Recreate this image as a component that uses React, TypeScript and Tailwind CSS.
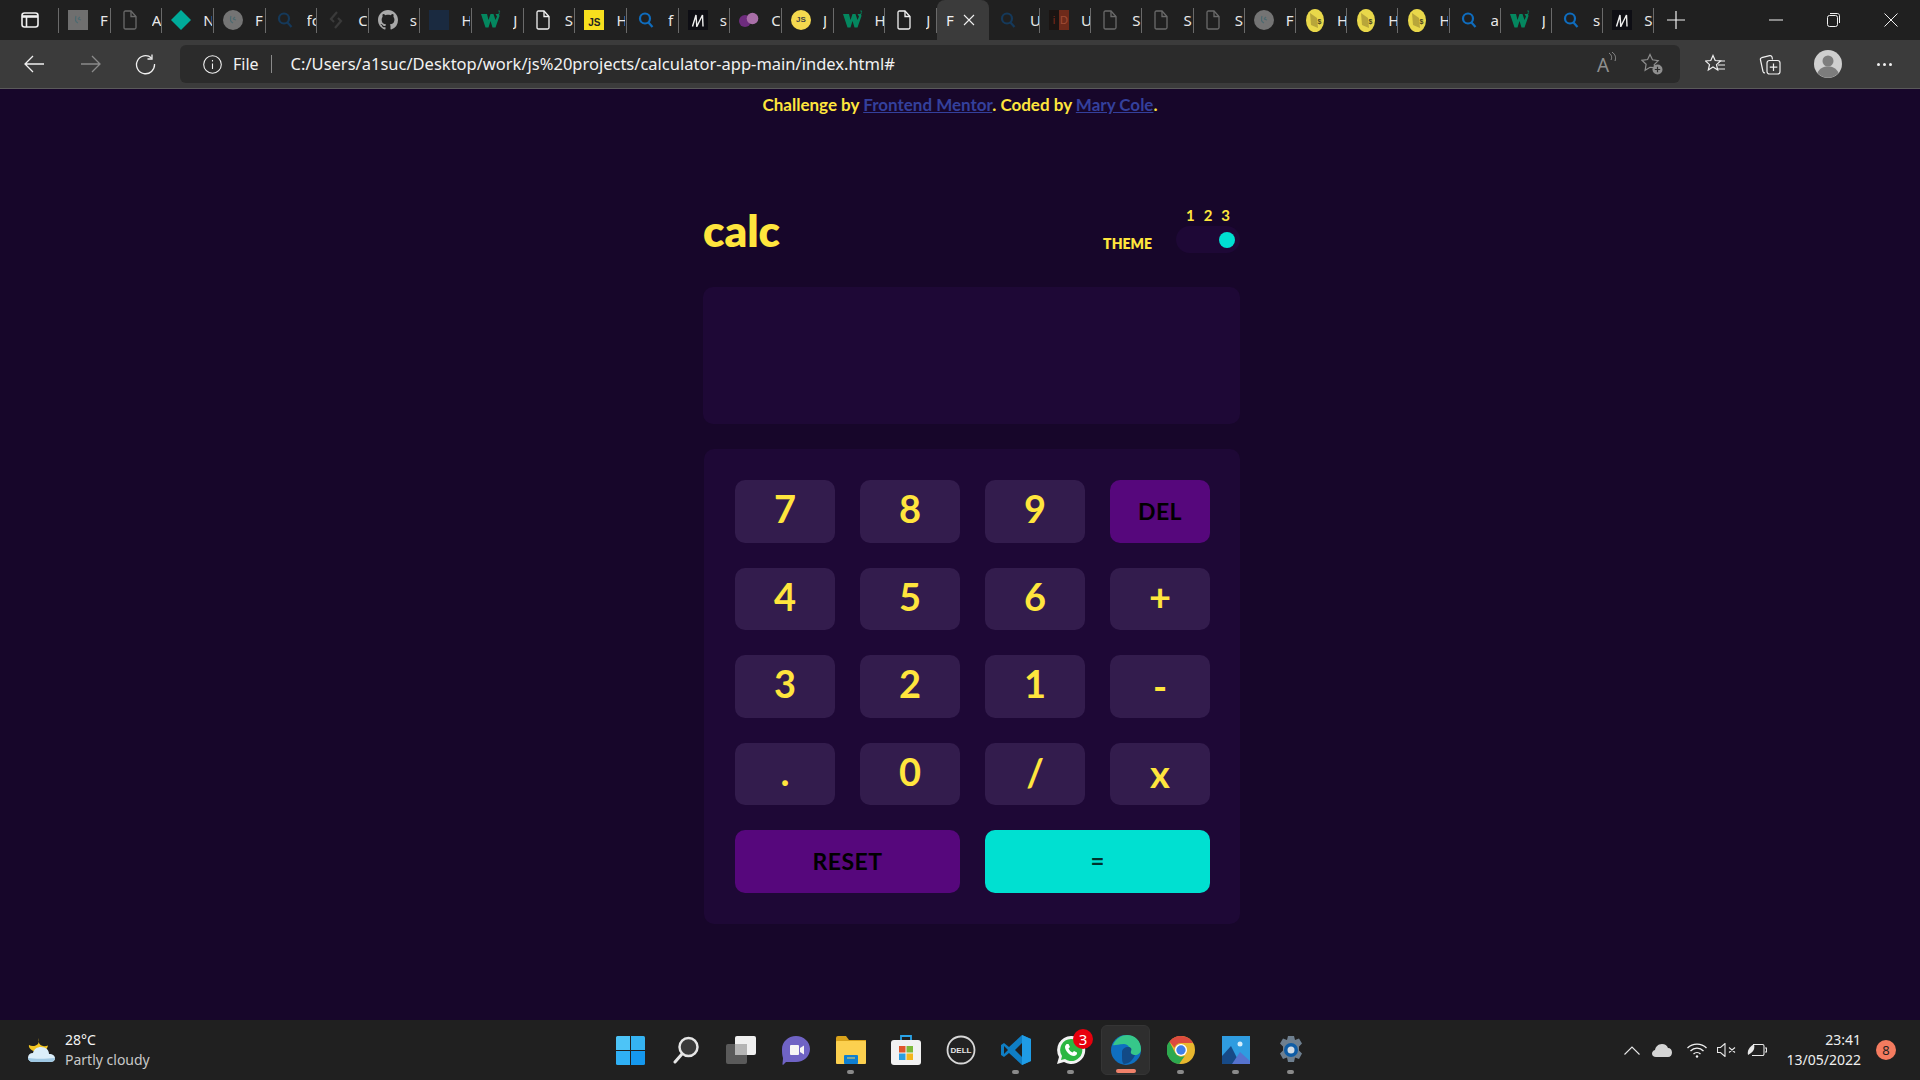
import React from "react";

type FavKind =
  | "grayBox" | "docDim" | "diamond" | "grayCircle" | "searchDim" | "chevrons" | "github" | "navy"
  | "w3" | "doc" | "jsBox" | "search" | "mdn" | "purple" | "jsCircle" | "idev" | "coin";

function Favicon({ kind }: { kind: FavKind }) {
  switch (kind) {
    case "grayBox":
      return (
        <svg width="20" height="20" viewBox="0 0 20 20">
          <rect width="20" height="20" fill="#6f6f6f" />
          <path d="M8 6c-1 3-.5 6 2 7M10 9l2-2M10 9l3 1" stroke="#4d6a70" strokeWidth="1.2" fill="none" />
        </svg>
      );
    case "grayCircle":
      return (
        <svg width="20" height="20" viewBox="0 0 20 20">
          <circle cx="10" cy="10" r="10" fill="#747474" />
          <path d="M8 6c-1 3-.5 6 2 7M10 9l2-2M10 9l3 1" stroke="#4d6a70" strokeWidth="1.2" fill="none" />
        </svg>
      );
    case "docDim":
    case "doc": {
      const c = kind === "doc" ? "#f2f2f2" : "#6a6a6a";
      return (
        <svg width="20" height="20" viewBox="0 0 20 20" fill="none" stroke={c} strokeWidth="1.3">
          <path d="M4 2.5c0-1 .5-1.5 1.5-1.5H11l5 5.5v11c0 1-.5 1.5-1.5 1.5h-9c-1 0-1.5-.5-1.5-1.5z" />
          <path d="M11 1v5.5h5" />
        </svg>
      );
    }
    case "diamond":
      return (
        <svg width="20" height="20" viewBox="0 0 20 20">
          <path d="M10 0l10 10-10 10L0 10z" fill="#00ab9a" />
        </svg>
      );
    case "search":
    case "searchDim": {
      const c = kind === "search" ? "#0f6cbd" : "#15395a";
      return (
        <svg width="20" height="20" viewBox="0 0 20 20" fill="none" stroke={c} strokeWidth="2.2">
          <circle cx="9" cy="8.5" r="5" />
          <path d="M12.5 12.5l4 4.5" />
        </svg>
      );
    }
    case "chevrons":
      return (
        <svg width="20" height="20" viewBox="0 0 20 20" fill="none" stroke="#3a3a3a" strokeWidth="2.2">
          <path d="M11 2L5 9l3 3M9 18l6-7-3-3" />
        </svg>
      );
    case "github":
      return (
        <svg width="20" height="20" viewBox="0 0 16 16" fill="#a8a8a8">
          <path d="M8 0C3.58 0 0 3.58 0 8c0 3.54 2.29 6.53 5.47 7.59.4.07.55-.17.55-.38 0-.19-.01-.82-.01-1.49-2.01.37-2.53-.49-2.69-.94-.09-.23-.48-.94-.82-1.13-.28-.15-.68-.52-.01-.53.63-.01 1.08.58 1.23.82.72 1.21 1.87.87 2.33.66.07-.52.28-.87.51-1.07-1.78-.2-3.64-.89-3.64-3.95 0-.87.31-1.59.82-2.15-.08-.2-.36-1.02.08-2.12 0 0 .67-.21 2.2.82.64-.18 1.32-.27 2-.27s1.36.09 2 .27c1.53-1.04 2.2-.82 2.2-.82.44 1.1.16 1.92.08 2.12.51.56.82 1.27.82 2.15 0 3.07-1.87 3.75-3.65 3.95.29.25.54.73.54 1.48 0 1.07-.01 1.93-.01 2.2 0 .21.15.46.55.38A8.01 8.01 0 0016 8c0-4.42-3.58-8-8-8z" />
        </svg>
      );
    case "navy":
      return <div className="w-5 h-5 bg-[#1a2a40]" />;
    case "w3":
      return (
        <svg width="20" height="20" viewBox="0 0 20 20">
          <path d="M0 4h6l1.500 6L9.500 4h3l2 6L16 6.500 14.500 4H18l.5 2-4 11.500h-3L9.500 11l-2 6.500h-3z" fill="#04875f" />
          <path d="M17 1h2l-1 1.200c1 .2 1 1.800-1 1.800" stroke="#04875f" strokeWidth=".7" fill="none" />
        </svg>
      );
    case "jsBox":
      return (
        <div className="w-5 h-5 bg-[#f7df1e] flex items-end justify-center text-[10px] leading-[15px] font-bold text-[#222] font-['Liberation_Sans',sans-serif]">
          JS
        </div>
      );
    case "jsCircle":
      return (
        <div className="w-5 h-5 rounded-full bg-[#f5d94e] flex items-center justify-center text-[8px] font-bold text-[#444] font-['Liberation_Sans',sans-serif]">
          JS
        </div>
      );
    case "mdn":
      return (
        <div className="w-5 h-5 bg-[#0e0e14] flex items-center justify-center">
          <svg width="14" height="13" viewBox="0 0 14 13" fill="none" stroke="#efefef" strokeWidth="1.4">
            <path d="M1.500 12.500L5 1l.8 11.500L11.500 1l.5 11.500" />
          </svg>
        </div>
      );
    case "purple":
      return (
        <svg width="20" height="20" viewBox="0 0 20 20">
          <circle cx="6" cy="11" r="6" fill="#6e2c7e" />
          <circle cx="13.5" cy="8.5" r="5.8" fill="#a96fa8" />
        </svg>
      );
    case "idev":
      return (
        <div className="w-5 h-5 flex text-[11px] leading-5 font-['Liberation_Sans',sans-serif]">
          <span className="w-2.5 h-5 bg-[#1a1412] text-[#7a2a1c] text-center">i</span>
          <span className="w-2.5 h-5 bg-[#6e2a1a] text-[#a04a34] text-center">D</span>
        </div>
      );
    case "coin":
      return (
        <svg width="18" height="23" viewBox="0 0 18 23">
          <ellipse cx="9" cy="11.5" rx="9" ry="11.5" fill="#e9d84a" />
          <path d="M4 4l7 5 1 10-7-3z" fill="#b8a63a" />
          <text x="11.5" y="15" fontSize="7" fontWeight="700" fill="#4a4420" fontFamily="Liberation Sans">$</text>
        </svg>
      );
  }
}

const tabs: { kind: FavKind; t: string }[] = [
  { kind: "grayBox", t: "F" },
  { kind: "docDim", t: "A" },
  { kind: "diamond", t: "N" },
  { kind: "grayCircle", t: "F" },
  { kind: "searchDim", t: "fc" },
  { kind: "chevrons", t: "C" },
  { kind: "github", t: "s" },
  { kind: "navy", t: "H" },
  { kind: "w3", t: "J" },
  { kind: "doc", t: "S" },
  { kind: "jsBox", t: "H" },
  { kind: "search", t: "f" },
  { kind: "mdn", t: "s" },
  { kind: "purple", t: "C" },
  { kind: "jsCircle", t: "J" },
  { kind: "w3", t: "H" },
  { kind: "doc", t: "J" },
];

const tabsAfter: { kind: FavKind; t: string }[] = [
  { kind: "searchDim", t: "U" },
  { kind: "idev", t: "U" },
  { kind: "docDim", t: "S" },
  { kind: "docDim", t: "S" },
  { kind: "docDim", t: "S" },
  { kind: "grayCircle", t: "F" },
  { kind: "coin", t: "H" },
  { kind: "coin", t: "H" },
  { kind: "coin", t: "H" },
  { kind: "search", t: "a" },
  { kind: "w3", t: "J" },
  { kind: "search", t: "s" },
  { kind: "mdn", t: "S" },
];

function Tab({ kind, t, wide }: { kind: FavKind; t: string; wide?: boolean }) {
  return (
    <div className={`${wide ? "w-[51.65px]" : "w-[51.2px]"} h-[25px] shrink-0 flex items-center border-r border-[#6a6a6a] pl-[9px]`}>
      <div className="w-5 flex justify-center shrink-0">
        <Favicon kind={kind} />
      </div>
      <div className="ml-3 w-[9px] overflow-hidden text-[15px] leading-5 text-[#e8e8e8] whitespace-nowrap">{t}</div>
    </div>
  );
}

function TabBar() {
  return (
    <div className="h-10 bg-[#202020] flex items-center shrink-0 relative">
      <div className="w-[59px] h-[25px] shrink-0 border-r border-[#6a6a6a] flex items-center pl-[21px]">
        <svg width="18" height="18" viewBox="0 0 18 18" fill="none" stroke="#f0f0f0" strokeWidth="1.6">
          <rect x="1" y="2" width="16" height="14" rx="2.5" />
          <path d="M1 5.5h16" strokeWidth="2.6" />
          <path d="M5.5 5.5V16" />
        </svg>
      </div>
      {tabs.map((tab, i) => (
        <Tab key={i} kind={tab.kind} t={tab.t} wide />
      ))}
      <div className="w-[52px] h-10 bg-[#3b3b3b] rounded-t-lg shrink-0 flex items-center pl-[9px]">
        <span className="text-[15px] text-[#f0f0f0] w-[9px] overflow-hidden">F</span>
        <svg className="ml-[8px]" width="12" height="12" viewBox="0 0 12 12" stroke="#f0f0f0" strokeWidth="1.1">
          <path d="M1 1l10 10M11 1L1 11" />
        </svg>
      </div>
      {tabsAfter.map((tab, i) => (
        <Tab key={i} kind={tab.kind} t={tab.t} />
      ))}
      <svg className="ml-[13px]" width="18" height="18" viewBox="0 0 18 18" stroke="#f0f0f0" strokeWidth="1.2">
        <path d="M9 0v18M0 9h18" />
      </svg>
      <div className="ml-auto flex items-center pr-[22px] gap-[44px]">
        <svg width="14" height="2" viewBox="0 0 14 2" stroke="#f0f0f0"><path d="M0 1h14" /></svg>
        <svg width="13" height="14" viewBox="0 0 13 14" fill="none" stroke="#f0f0f0">
          <rect x=".5" y="2.5" width="10" height="11" rx="2" />
          <path d="M3 .5h7.5c1 0 2 1 2 2V10" />
        </svg>
        <svg width="14" height="14" viewBox="0 0 14 14" stroke="#f0f0f0"><path d="M.5.5l13 13M13.5.5l-13 13" /></svg>
      </div>
    </div>
  );
}

function NavBar() {
  return (
    <div className="h-[49px] bg-[#3b3b3b] border-b border-[#5a5a5a] flex items-center shrink-0">
      <div className="w-[180px] flex items-center pl-6 gap-[35px] shrink-0">
        <svg width="21" height="18" viewBox="0 0 21 18" fill="none" stroke="#f0f0f0" strokeWidth="1.3"><path d="M20 9H1M9 1L1 9l8 8" /></svg>
        <svg width="21" height="18" viewBox="0 0 21 18" fill="none" stroke="#8a8a8a" strokeWidth="1.3"><path d="M1 9h19M12 1l8 8-8 8" /></svg>
        <svg className="-ml-[1px]" width="21" height="21" viewBox="0 0 21 21" fill="none" stroke="#f0f0f0" strokeWidth="1.3">
          <path d="M16.5 4a9 9 0 1 0 3 6" />
          <path d="M17 .5V5h-4.5" />
        </svg>
      </div>
      <div className="w-[1500px] h-[38px] bg-[#2b2b2b] rounded-md flex items-center pl-[23px] shrink-0">
        <svg width="19" height="19" viewBox="0 0 19 19" fill="none" stroke="#f0f0f0" strokeWidth="1.1">
          <circle cx="9.5" cy="9.5" r="8.8" />
          <path d="M9.5 8.5v5.5M9.5 5v1.5" />
        </svg>
        <span className="ml-[11px] text-[16px] text-[#f2f2f2]">File</span>
        <span className="ml-[12px] w-[1px] h-[18px] bg-[#8a8a8a]" />
        <span className="ml-[19px] text-[16.5px] text-[#f2f2f2]">
          C:/Users/a1suc/Desktop/work/js%20projects/calculator-app-main/index.html#
        </span>
        <div className="ml-auto flex items-center gap-[24px] pr-[17px]">
          <div className="relative w-5 h-5">
            <span className="text-[19px] leading-5 text-[#8f8f8f]">A</span>
            <svg className="absolute -top-[2px] left-[11px]" width="9" height="11" viewBox="0 0 9 11" fill="none" stroke="#8f8f8f">
              <path d="M1 1c3 2 3 5 2 7M4 0c4 3 4 6 3 9" />
            </svg>
          </div>
          <svg width="22" height="22" viewBox="0 0 22 22" fill="none" stroke="#8f8f8f" strokeWidth="1.2">
            <path d="M9 1.5l2.5 5.3 5.7.8-4 4 .6 3-4.8-.3-4.9 3 1-6-4.2-4 5.7-.8z" />
            <circle cx="16.5" cy="16.5" r="5" fill="#8f8f8f" stroke="none" />
            <path d="M16.5 13.8v5.4M13.8 16.5h5.4" stroke="#2b2b2b" />
          </svg>
        </div>
      </div>
      <div className="flex items-center ml-[25px] gap-[35px]">
        <svg width="20" height="20" viewBox="0 0 20 20" fill="none" stroke="#f0f0f0" strokeWidth="1.2">
          <path d="M8 1.5l2.2 5 5.3.5-4 3.6 1.2 5.3L8 13l-4.7 3 1.2-5.4L.5 7l5.3-.5z" />
          <path d="M14 7h6M13 11h7M12 15h8" />
        </svg>
        <svg className="-ml-[1px]" width="22" height="22" viewBox="0 0 22 22" fill="none" stroke="#f0f0f0" strokeWidth="1.2">
          <path d="M6 20c-1 0-1.600-.5-2-1.500L1.500 7c-.3-1 .2-2 1.200-2.300l8-2c1-.2 2 .4 2.300 1.300l.5 2.500" />
          <rect x="8" y="7.500" width="13" height="13.500" rx="2.500" />
          <path d="M14.500 10.500v7.500M10.800 14.200h7.500" />
        </svg>
        <svg className="-ml-[2px]" width="28" height="28" viewBox="0 0 28 28">
          <circle cx="14" cy="14" r="14" fill="#cfcfcf" />
          <circle cx="14" cy="11" r="5.500" fill="#7d7d7d" />
          <path d="M3.500 23c2-5 6-6.500 10.500-6.500S22.500 18 24.500 23A14 14 0 0 1 3.500 23z" fill="#7d7d7d" />
        </svg>
        <div className="flex gap-[3px]">
          <span className="w-[3px] h-[3px] rounded-full bg-[#f0f0f0]" />
          <span className="w-[3px] h-[3px] rounded-full bg-[#f0f0f0]" />
          <span className="w-[3px] h-[3px] rounded-full bg-[#f0f0f0]" />
        </div>
      </div>
    </div>
  );
}

const keys = ["7", "8", "9", "DEL", "4", "5", "6", "+", "3", "2", "1", "-", ".", "0", "/", "x"];

function Key({ label }: { label: string }) {
  if (label === "DEL") {
    return (
      <button className="h-[62.5px] rounded-[10px] bg-[#56077c] text-black text-[23px] font-bold tracking-[0.5px]">
        {label}
      </button>
    );
  }
  // x and - already sit on the middle, the digits ride a bit high
  const shift = label === "x" || label === "-" ? "" : "pb-[6px]";
  return (
    <button className={`h-[62.5px] rounded-[10px] bg-[#331c4d] text-[#ffe53d] text-[38px] font-bold ${shift}`}>
      {label}
    </button>
  );
}

function Calculator() {
  return (
    <div className="flex-1 bg-[#17062a] min-h-0 font-['Lato',sans-serif]">
      <p className="text-center text-[17px] leading-[20px] pt-[6px] font-bold text-[#ffe53d]">
        Challenge by <a href="#" className="text-[#34409c] underline">Frontend Mentor</a>. Coded by{" "}
        <a href="#" className="text-[#34409c] underline">Mary Cole</a>.
      </p>
      <div className="ml-[703px] w-[537px] mt-[88px]">
        <div className="flex items-end h-[65px]">
          <h1 className="text-[44px] leading-[44px] font-extrabold text-[#ffe53d] mb-[16px]">calc</h1>
          <div className="ml-auto flex items-end">
            <span className="text-[14px] leading-5 font-extrabold text-[#ffe53d] mb-[14px]">THEME</span>
            <div className="ml-[24px] w-[64px] mb-[15px]">
              <div className="flex justify-between px-[10px] text-[15px] leading-[20px] font-bold text-[#ffe53d]">
                <span>1</span>
                <span>2</span>
                <span>3</span>
              </div>
              <div className="h-[27px] mt-[1px] rounded-[14px] bg-[#1e0836] flex items-center justify-end pr-[5px]">
                <span className="w-4 h-4 rounded-full bg-[#00e0d1]" />
              </div>
            </div>
          </div>
        </div>
        <div className="h-[137px] mt-[19px] rounded-[10px] bg-[#1e0836]" />
        <div className="mt-[25px] ml-[1px] rounded-[10px] bg-[#1e0836] pt-[31px] pl-[31px] pr-[30px] pb-[31px] grid grid-cols-4 gap-[25px]">
          {keys.map((k) => (
            <Key key={k} label={k} />
          ))}
          <button className="col-span-2 h-[62.5px] rounded-[10px] bg-[#56077c] text-black text-[23px] font-bold tracking-[0.5px]">
            RESET
          </button>
          <button className="col-span-2 h-[62.5px] rounded-[10px] bg-[#00e0d1] text-black/80 text-[24px] font-bold">
            =
          </button>
        </div>
      </div>
    </div>
  );
}

function TaskIcon({ children, dot, active }: { children: React.ReactNode; dot?: boolean; active?: boolean }) {
  return (
    <div className={`relative w-[49px] h-[50px] rounded-md flex items-center justify-center ${active ? "bg-[#2e2e2e] border border-[#353535]" : ""}`}>
      {children}
      {dot && <span className="absolute bottom-[1px] left-[21px] w-[7px] h-1 rounded-sm bg-[#8a8a8a]" />}
      {active && <span className="absolute bottom-[1px] left-[14px] w-[20px] h-1 rounded-sm bg-[#f0816a]" />}
    </div>
  );
}

function TaskBar() {
  return (
    <div className="h-[60px] bg-[#202020] shrink-0 flex items-center relative text-white font-['Noto_Sans',sans-serif]">
      <div className="flex items-center pl-[27px] w-[604px] shrink-0">
        <svg width="29" height="26" viewBox="0 0 29 26">
          <path d="M12 1c-1 4 0 7 4 8 2 .5 3 .3 5-.5-1 5-6 8-11 7C5 14 1 11 2 8c3 2 7 1 9-1 1-2 1-4 1-6z" fill="#f3c623" />
          <path d="M6 25c-3 0-5-2-5-4.500S3 16 6 16c1-4 4-6 8-6 5 0 8 3 8 7 4 0 6 2 6 4.500S26 25 23 25z" fill="#dbeefa" />
          <path d="M6 25c-3 0-5-2-5-4 6 1 18 1 27 0 0 2-2 4-5 4z" fill="#9fc8e3" />
        </svg>
        <div className="ml-[9px] text-[14px] leading-[20px] -mt-[1px]">
          <div className="text-[#f5f5f5]">28°C</div>
          <div className="text-[#c8c8c8]">Partly cloudy</div>
        </div>
      </div>
      <div className="flex items-center gap-[6px] ml-[2px]">
        <TaskIcon>
          <svg width="29" height="29" viewBox="0 0 29 29">
            <path d="M0 1.500A1.500 1.500 0 0 1 1.500 0H14v14H0z" fill="#4dc4f7" />
            <path d="M15 0h12.500A1.500 1.500 0 0 1 29 1.500V14H15z" fill="#35b3f2" />
            <path d="M0 15h14v14H1.500A1.500 1.500 0 0 1 0 27.500z" fill="#2fb0f5" />
            <path d="M15 15h14v12.500a1.500 1.500 0 0 1-1.500 1.500H15z" fill="#1598ee" />
          </svg>
        </TaskIcon>
        <TaskIcon>
          <svg width="28" height="28" viewBox="0 0 28 28" fill="none">
            <circle cx="16.500" cy="11" r="9" stroke="#e6e6e6" strokeWidth="2.500" fill="#3a3a3a" />
            <path d="M10 18l-7 8" stroke="#e6e6e6" strokeWidth="3" strokeLinecap="round" />
          </svg>
        </TaskIcon>
        <TaskIcon>
          <svg width="30" height="28" viewBox="0 0 30 28">
            <rect x="0" y="8" width="21" height="20" rx="2" fill="#5a5a5a" />
            <rect x="9" y="0" width="21" height="19" rx="2" fill="#f0f0f0" />
            <rect x="9" y="8" width="12" height="11" fill="#b5b5b5" />
          </svg>
        </TaskIcon>
        <TaskIcon>
          <svg width="28" height="29" viewBox="0 0 28 29">
            <path d="M14 0c8 0 14 6 14 13s-6 13-14 13H4l-3 3c-1 0 0-4 0-7-1-3-1-6-1-9C0 6 6 0 14 0z" fill="#6f63c4" />
            <rect x="8" y="9" width="9" height="10" rx="1" fill="#f5f5f5" />
            <path d="M18 12l4-2.500v9L18 16z" fill="#f5f5f5" />
          </svg>
        </TaskIcon>
        <TaskIcon dot>
          <svg width="30" height="28" viewBox="0 0 30 28">
            <path d="M0 2a2 2 0 0 1 2-2h8l3 4h17v4H0z" fill="#d9a21b" />
            <rect y="5" width="30" height="23" rx="1" fill="#fcd04f" />
            <rect x="8" y="19" width="14" height="9" rx="1" fill="#0f7fd1" />
            <path d="M11 22h8" stroke="#f6d25f" />
          </svg>
        </TaskIcon>
        <TaskIcon>
          <svg width="30" height="30" viewBox="0 0 30 30">
            <path d="M10 6V1h10v5" fill="none" stroke="#2aa4e8" strokeWidth="1.800" />
            <rect y="5" width="30" height="25" rx="3" fill="#f2f2f2" />
            <rect x="8" y="11" width="6.500" height="6.500" fill="#e0562b" />
            <rect x="15.500" y="11" width="6.500" height="6.500" fill="#7cb93a" />
            <rect x="8" y="18.500" width="6.500" height="6.500" fill="#2a9ee0" />
            <rect x="15.500" y="18.500" width="6.500" height="6.500" fill="#f3b61c" />
          </svg>
        </TaskIcon>
        <TaskIcon>
          <svg width="30" height="30" viewBox="0 0 30 30">
            <circle cx="15" cy="15" r="13.500" fill="#222" stroke="#d8d8d8" strokeWidth="1.800" />
            <text x="15" y="18" textAnchor="middle" fontSize="8" fontWeight="700" fill="#e6e6e6" fontFamily="Liberation Sans">DELL</text>
          </svg>
        </TaskIcon>
        <TaskIcon dot>
          <svg width="30" height="30" viewBox="0 0 30 30">
            <path d="M21 0l9 4v22l-9 4L8 18l-5 4-3-2v-10l3-2 5 4z" fill="#0f7ec4" />
            <path d="M21 0l9 4v22l-9 4z" fill="#1f9ce6" />
            <path d="M21 8l-7 7 7 7z" fill="#202020" />
            <path d="M3 11l4 4-4 4z" fill="#202020" />
          </svg>
        </TaskIcon>
        <TaskIcon dot>
          <svg width="30" height="30" viewBox="0 0 30 30">
            <path d="M15 1a14 14 0 0 0-12 21L1 29l7-2A14 14 0 1 0 15 1z" fill="#f3f3f3" />
            <path d="M15 4a11 11 0 0 0-9 17l-1 4 4-1A11 11 0 1 0 15 4z" fill="#2bb741" />
            <path d="M11 9c-1 0-2 2-2 3 0 4 5 9 9 9 1 0 3-1 3-2.500v-1l-3-1.500-1.500 1.500c-2-1-3-2-4-4L14 12l-1.500-3z" fill="#fff" />
          </svg>
          <span className="absolute top-[4px] left-[27px] w-[20px] h-[20px] rounded-full bg-[#e8000d] text-[15px] leading-[20px] text-center text-white">3</span>
        </TaskIcon>
        <TaskIcon active>
          <svg width="30" height="30" viewBox="0 0 30 30">
            <circle cx="15" cy="15" r="15" fill="#0f6fc0" />
            <path d="M2 10C5 3 11 0 16 0c8 0 14 6 14 14 0 4-3 6-6 6-4 0-6-2-6-4 2-3-1-7-5-7-6 0-10 2-11 1z" fill="#36c78a" />
            <path d="M11 17c0-3 3-5 6-5s4 2 3 4c-1 3 2 4 4 4-2 5-6 9-11 9-2-1-2-4-2-12z" fill="#124a86" />
          </svg>
        </TaskIcon>
        <TaskIcon dot>
          <svg width="28" height="30" viewBox="0 0 30 30">
            <circle cx="15" cy="15" r="15" fill="#e8b72e" />
            <path d="M15 0a15 15 0 0 1 13 7.500H15a7.500 7.500 0 0 0-7 5L2.500 6A15 15 0 0 1 15 0z" fill="#dd4b3e" />
            <path d="M2.500 6l6.500 12.500A7.500 7.500 0 0 0 19 21.500L13 30A15 15 0 0 1 2.500 6z" fill="#2da94f" />
            <circle cx="15" cy="15" r="6.500" fill="#fff" />
            <circle cx="15" cy="15" r="5" fill="#3f7fe8" />
          </svg>
        </TaskIcon>
        <TaskIcon dot>
          <svg width="28" height="28" viewBox="0 0 28 28">
            <rect width="28" height="28" fill="#2f9ce0" />
            <circle cx="18" cy="8" r="2.500" fill="#d6eefa" />
            <path d="M0 28V20l9-10 9 18z" fill="#174a87" />
            <path d="M10 28l8-12 10 9v3z" fill="#5673cf" />
          </svg>
        </TaskIcon>
        <TaskIcon dot>
          <svg width="28" height="29" viewBox="0 0 28 29">
            <path d="M11 0h6l1 4 4-1.500 3 5-3 3v4l3 3-3 5.500-4-1.500-1 4.500h-6l-1-4.500-4 1.500-3-5.500 3-3v-4l-3-3 3-5 4 1.500z" fill="#6e7f8f" />
            <circle cx="14" cy="14" r="7" fill="#0e5ca5" />
            <circle cx="14" cy="14" r="3.500" fill="#d4dde6" />
          </svg>
        </TaskIcon>
      </div>
      <div className="ml-auto flex items-center pr-[24px]">
        <svg width="16" height="9" viewBox="0 0 16 9" fill="none" stroke="#e8e8e8" strokeWidth="1.100"><path d="M.5 8.500L8 1l7.500 7.500" /></svg>
        <svg className="ml-[12px]" width="20" height="13" viewBox="0 0 20 13"><path d="M4 13c-2.500 0-4-1.500-4-3.500C0 8 1 6.500 3 6c.5-3 3-6 7-6 3 0 5 1.500 6 4 2.500 0 4 2 4 4.500S18.500 13 16 13z" fill="#d4d4d4" /></svg>
        <svg className="ml-[15px]" width="20" height="15" viewBox="0 0 20 15" fill="none" stroke="#f0f0f0" strokeWidth="1.300">
          <path d="M.5 5a13.500 13.500 0 0 1 19 0M3.500 8a9 9 0 0 1 13 0M6.500 11a5 5 0 0 1 7 0" />
          <circle cx="10" cy="13.500" r="1.200" fill="#f0f0f0" stroke="none" />
        </svg>
        <svg className="ml-[10px]" width="19" height="14" viewBox="0 0 19 14" fill="none" stroke="#e8e8e8" strokeWidth="1.100">
          <path d="M.5 4.500h3L8 .5v13l-4.500-4h-3zM12 4.500l6 5M18 4.500l-6 5" />
        </svg>
        <svg className="ml-[11px]" width="20" height="14" viewBox="0 0 20 14" fill="none" stroke="#e8e8e8" strokeWidth="1.100">
          <path d="M6 1.500h9.500a1.500 1.500 0 0 1 1.500 1.500v8a1.500 1.500 0 0 1-1.500 1.500H5" />
          <path d="M18 5h1.500v4H18" />
          <path d="M1 12c-1-4 1-8 6-11 1 4 0 7-3 9z" fill="#e8e8e8" stroke="none" />
        </svg>
        <div className="w-[94px] text-right text-[14px] leading-[20px] text-[#eeeeee]">
          <div>23:41</div>
          <div>13/05/2022</div>
        </div>
        <span className="ml-[15px] w-5 h-5 rounded-full bg-[#f47b5f] text-[13px] leading-5 text-center text-[#222]">8</span>
      </div>
    </div>
  );
}

export default function App() {
  return (
    <div className="w-[1920px] h-[1080px] flex flex-col overflow-hidden font-['Noto_Sans',sans-serif]">
      <TabBar />
      <NavBar />
      <Calculator />
      <TaskBar />
    </div>
  );
}
